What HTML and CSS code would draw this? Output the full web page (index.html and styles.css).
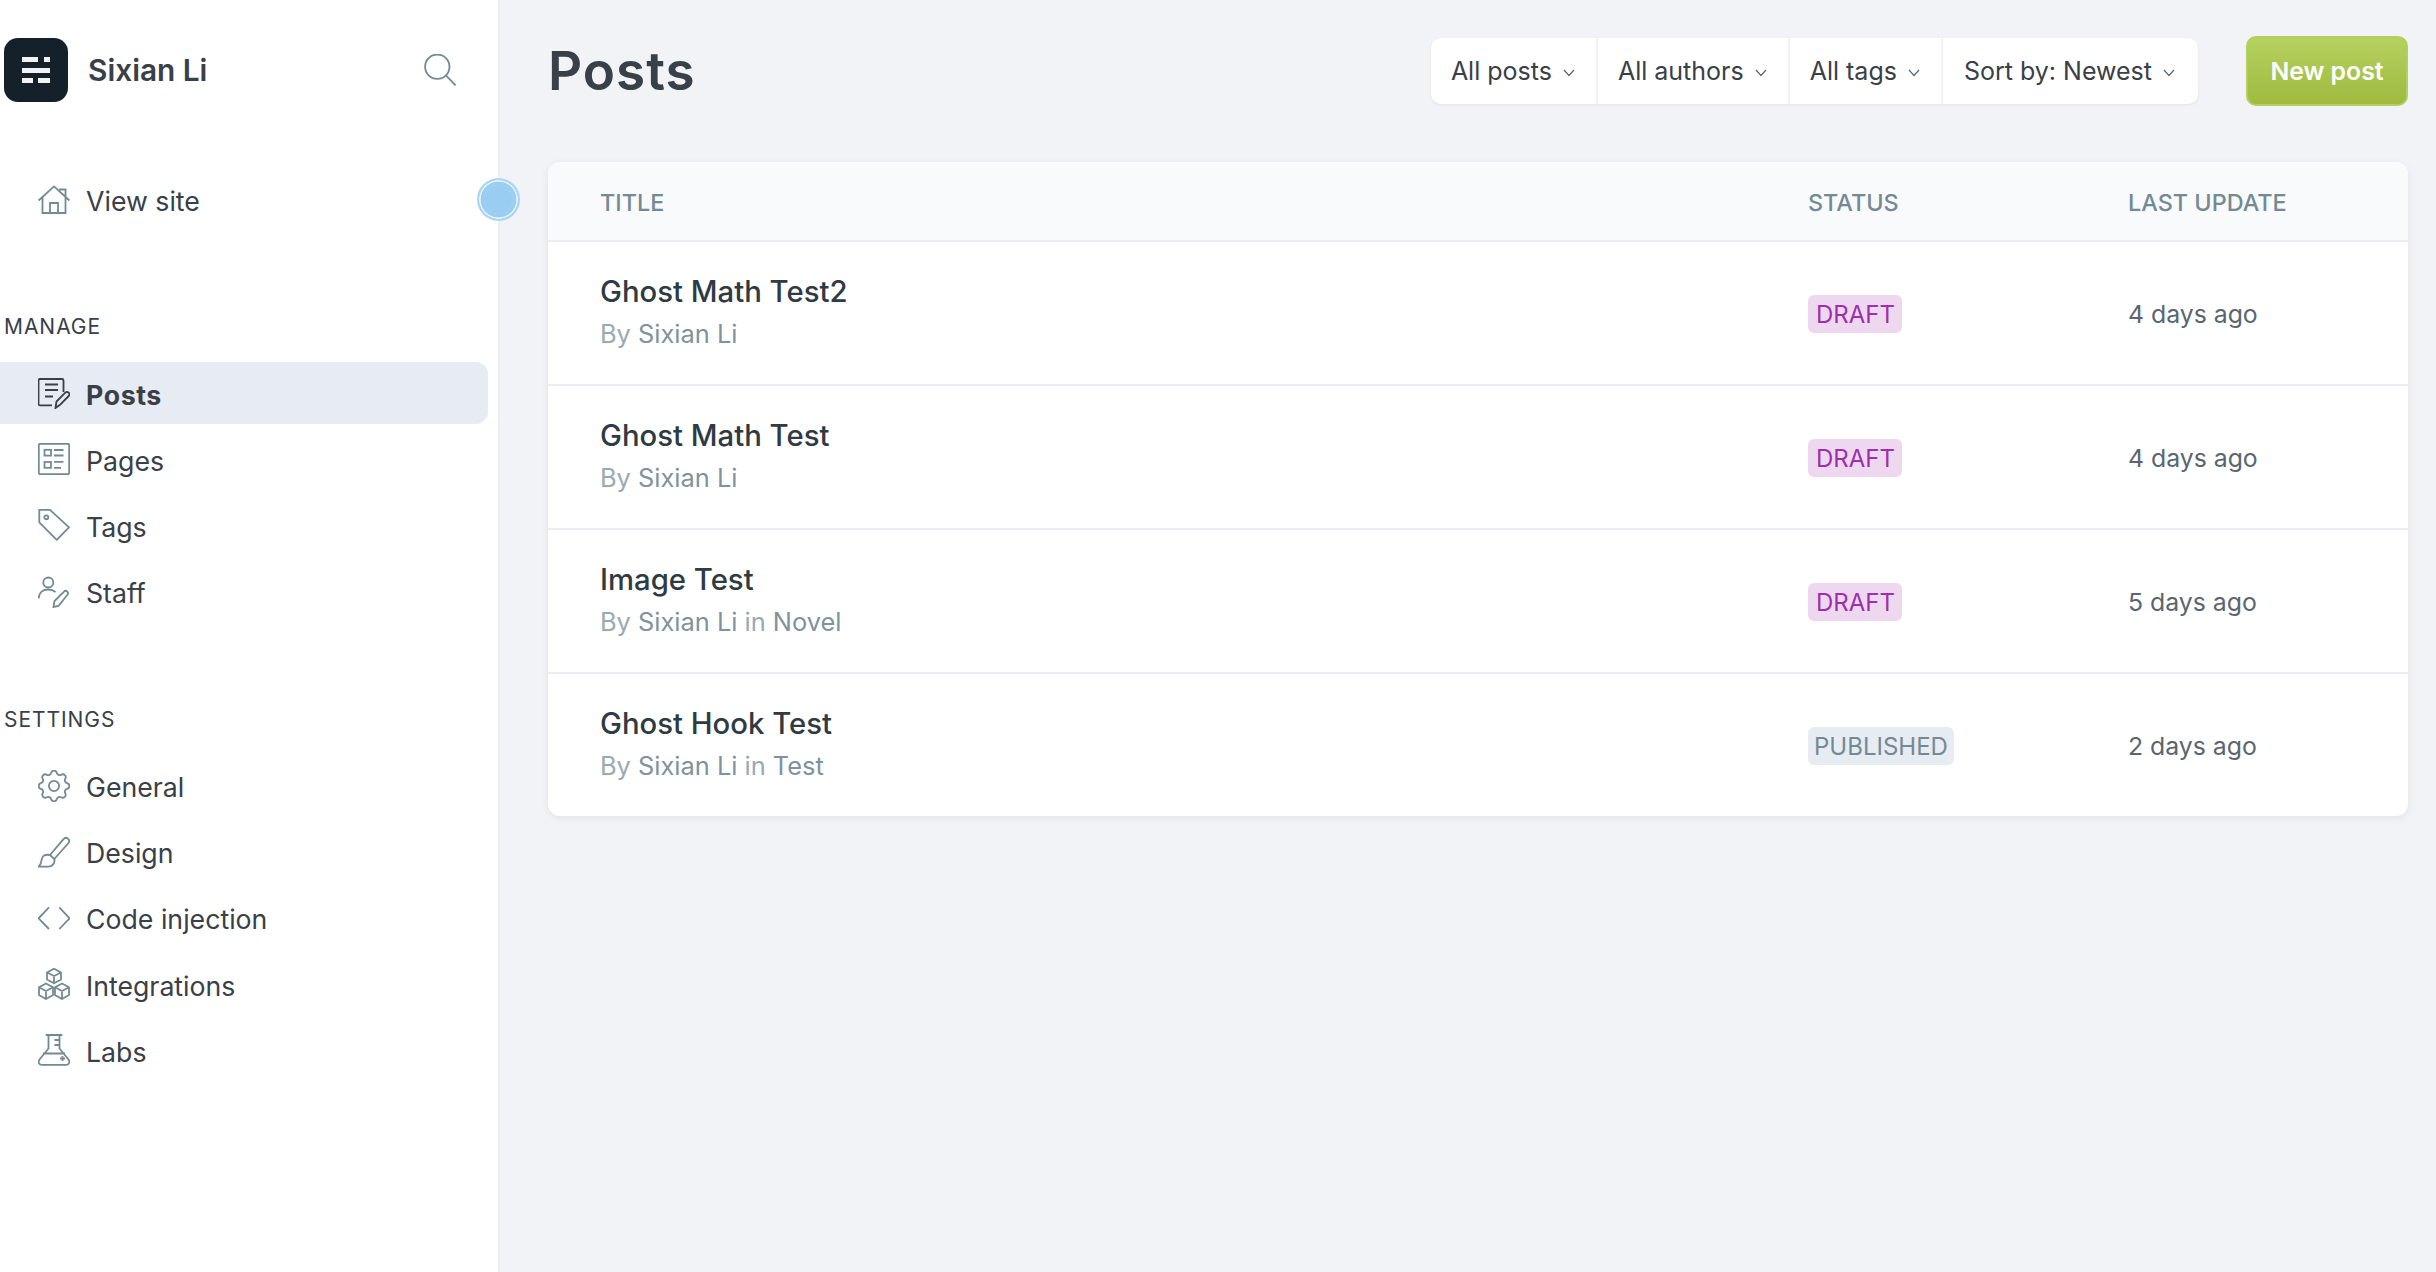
FILE: index.html
```html
<!DOCTYPE html>
<html lang="en">
<head>
    <meta charset="UTF-8">
    <meta name="viewport" content="width=device-width, initial-scale=1.0">
    <title>Posts</title>
    <link rel="stylesheet" href="styles.css">
</head>
<body>
    <div class="app">
        <aside class="sidebar">
            <div class="brand">
                <svg class="logo" viewBox="0 0 64 64">
                    <rect width="64" height="64" rx="14" fill="#15212a"/>
                    <g fill="#f1f3f5">
                        <rect x="18" y="19" width="16" height="5"/>
                        <rect x="40" y="19" width="6" height="5"/>
                        <rect x="18" y="30" width="28" height="5"/>
                        <rect x="18" y="40" width="11" height="5"/>
                        <rect x="34" y="40" width="12" height="5"/>
                    </g>
                </svg>
                <span class="brand-name">Sixian Li</span>
                <svg class="icon search-icon" viewBox="0 0 32 32"><circle cx="13.3" cy="12.7" r="12.2"/><path d="M22.4 21.8l9.2 9.6"/></svg>
            </div>

            <a class="nav-item view-site" href="#">
                <svg class="icon" viewBox="0 0 32 32"><path d="M.6 17.5L16 3.4l15.4 14.1M22 7.500l0-1h5.500v8M4.500 14.500V30h23V14.500M12 30V20h8v10"/></svg>
                View site
            </a>

            <h4 class="nav-label">MANAGE</h4>
            <nav class="nav-group">
                <a class="nav-item active" href="#">
                    <svg class="icon" viewBox="0 0 32 32"><path d="M14 28.300H2a1.500 1.500 0 0 1-1.500-1.500V3.500A1.500 1.500 0 0 1 2 2h22a1.500 1.500 0 0 1 1.500 1.500V15M7 7.500h13M7 13h13M7 19.500h8"/><path d="M17.500 31l1-6.500L27.300 15.700a2.300 2.300 0 0 1 3.400 3.300L22 27.800z"/></svg>
                    Posts
                </a>
                <a class="nav-item" href="#">
                    <svg class="icon" viewBox="0 0 32 32"><rect x=".8" y=".8" width="30.400" height="30.400" rx="1.500"/><rect x="6.500" y="6.800" width="6.500" height="5.800"/><rect x="6.500" y="19" width="6.500" height="5.800"/><path d="M16 7h9.500M16 12.500h9.500M16 18.800h9.500M16 24.800h7"/></svg>
                    Pages
                </a>
                <a class="nav-item" href="#">
                    <svg class="icon" viewBox="0 0 32 32"><path d="M1.300.8H12L31 18.300 18.700 30.800 1.300 13.300z" stroke-linejoin="round"/><circle cx="8.300" cy="8.300" r="2"/></svg>
                    Tags
                </a>
                <a class="nav-item" href="#">
                    <svg class="icon" viewBox="0 0 32 32"><circle cx="10.300" cy="6.500" r="5"/><path d="M.6 22.500C1 16.500 5 13.500 10 13.500c3 0 5.500.8 7.500 2.500"/><path d="M15.500 31l1-6 9.300-9.200a2.300 2.300 0 0 1 3.600 3L20.500 30z"/></svg>
                    Staff
                </a>
            </nav>

            <h4 class="nav-label settings-label">SETTINGS</h4>
            <nav class="nav-group">
                <a class="nav-item" href="#">
                    <svg class="icon" viewBox="2.600 2.600 18.800 18.800"><path class="thin" d="M10.325 4.317c.426-1.756 2.924-1.756 3.350 0a1.724 1.724 0 002.573 1.066c1.543-.94 3.310.826 2.370 2.370a1.724 1.724 0 001.065 2.572c1.756.426 1.756 2.924 0 3.350a1.724 1.724 0 00-1.066 2.573c.94 1.543-.826 3.310-2.370 2.370a1.724 1.724 0 00-2.572 1.065c-.426 1.756-2.924 1.756-3.350 0a1.724 1.724 0 00-2.573-1.066c-1.543.94-3.310-.826-2.370-2.370a1.724 1.724 0 00-1.065-2.572c-1.756-.426-1.756-2.924 0-3.350a1.724 1.724 0 001.066-2.573c-.94-1.543.826-3.310 2.370-2.370.996.608 2.296.07 2.572-1.065z"/><circle class="thin" cx="12" cy="12" r="3"/></svg>
                    General
                </a>
                <a class="nav-item" href="#">
                    <svg class="icon" viewBox="0 0 32 32"><path d="M12 19L25.500 3.200a3 3 0 0 1 5 3.800L16.300 23"/><path d="M12 19c-5-1-8 1-8.300 4.500-.2 3-1 5-3 7.200h9.600c4 0 7-3.500 6-7.700z" stroke-linejoin="round"/></svg>
                    Design
                </a>
                <a class="nav-item" href="#">
                    <svg class="icon" viewBox="0 0 32 32"><path d="M11 5.300L.6 16.300 11 27M21.300 5.300l10.300 11-10.300 10.700"/></svg>
                    Code injection
                </a>
                <a class="nav-item" href="#">
                    <svg class="icon" viewBox="0 0 32 32"><path d="M16 .7l7 3.800v7l-7 3.800-7-3.800v-7zM9 4.500l7 3.600 7-3.600M16 8.100v7.200"/><path d="M8 15.500l7 3.800v7.700l-7 4-7-4v-7.700zM1 19.300l7 3.800 7-3.800M8 23.100V31"/><path d="M24 15.500l7 3.800v7.700l-7 4-7-4v-7.700zM17 19.300l7 3.800 7-3.800M24 23.100V31"/></svg>
                    Integrations
                </a>
                <a class="nav-item" href="#">
                    <svg class="icon" viewBox="0 0 32 32"><path d="M7.700 1h16.600M10.500 1v13.500L1.500 25.500c-1.800 2.500-.5 5.300 2.500 5.300h24c3 0 4.300-2.800 2.500-5.300l-9-11V1M21.500 6h-5M21.500 11h-5M5 19.500h22"/><path d="M22 24.500h5M24.500 22v5M8 27.500h.1M12.500 23.500h.1"/></svg>
                    Labs
                </a>
            </nav>
        </aside>

        <main class="content">
            <header class="page-header">
                <h1>Posts</h1>
                <div class="filters">
                    <button class="filter">All posts <svg class="caret" viewBox="0 0 12 8"><path d="M1 1l5 5.500L11 1"/></svg></button>
                    <button class="filter">All authors <svg class="caret" viewBox="0 0 12 8"><path d="M1 1l5 5.500L11 1"/></svg></button>
                    <button class="filter">All tags <svg class="caret" viewBox="0 0 12 8"><path d="M1 1l5 5.500L11 1"/></svg></button>
                    <button class="filter">Sort by: Newest <svg class="caret" viewBox="0 0 12 8"><path d="M1 1l5 5.500L11 1"/></svg></button>
                </div>
                <button class="new-post">New post</button>
            </header>

            <table class="posts">
                <thead>
                    <tr>
                        <th class="col-title">TITLE</th>
                        <th class="col-status">STATUS</th>
                        <th class="col-date">LAST UPDATE</th>
                    </tr>
                </thead>
                <tbody>
                    <tr>
                        <td>
                            <h3>Ghost Math Test2</h3>
                            <p class="meta">By <span>Sixian Li</span></p>
                        </td>
                        <td class="status"><span class="badge draft">DRAFT</span></td>
                        <td class="date">4 days ago</td>
                    </tr>
                    <tr>
                        <td>
                            <h3>Ghost Math Test</h3>
                            <p class="meta">By <span>Sixian Li</span></p>
                        </td>
                        <td class="status"><span class="badge draft">DRAFT</span></td>
                        <td class="date">4 days ago</td>
                    </tr>
                    <tr>
                        <td>
                            <h3>Image Test</h3>
                            <p class="meta">By <span>Sixian Li</span> in <span>Novel</span></p>
                        </td>
                        <td class="status"><span class="badge draft">DRAFT</span></td>
                        <td class="date">5 days ago</td>
                    </tr>
                    <tr>
                        <td>
                            <h3>Ghost Hook Test</h3>
                            <p class="meta">By <span>Sixian Li</span> in <span>Test</span></p>
                        </td>
                        <td class="status"><span class="badge published">PUBLISHED</span></td>
                        <td class="date">2 days ago</td>
                    </tr>
                </tbody>
            </table>
        </main>
    </div>
    <div class="pointer"></div>
</body>
</html>
```
FILE: styles.css
```css
* {
    margin: 0;
    padding: 0;
    box-sizing: border-box;
}

body, html {
    height: 100%;
    font-family: Inter, "Noto Sans", sans-serif;
    color: #394047;
    background: #f1f3f7;
}

.app {
    display: flex;
    height: 100%;
}

/* sidebar */
.sidebar {
    width: 500px;
    flex-shrink: 0;
    padding: 38px 10px 0 0;
    background: #fff;
    border-right: 2px solid #eceef4;
}

.brand {
    display: flex;
    align-items: center;
    height: 64px;
    padding-left: 4px;
    margin-bottom: 66px;
}

.logo {
    width: 64px;
    height: 64px;
}

.brand-name {
    margin-left: 20px;
    font-size: 29.8px;
    font-weight: 600;
    flex-grow: 1;
}

.icon {
    width: 32px;
    height: 32px;
    flex-shrink: 0;
    fill: none;
    stroke: #738a94;
    stroke-width: 1.8;
}

.icon .thin {
    stroke-width: 1.05;
}

.search-icon {
    margin-right: 32px;
}

.nav-item {
    display: flex;
    align-items: center;
    gap: 16px;
    height: 62px;
    padding: 3px 0 0 38px;
    font-size: 26.7px;
    color: #394047;
    text-decoration: none;
    border-radius: 0 12px 12px 0;
}

.nav-item .icon {
    margin-bottom: 3px;
}

.nav-item.active {
    background: #e7ebf3;
    font-weight: 700;
    letter-spacing: 0.6px;
}

.nav-item.active .icon {
    stroke: #394047;
}

.nav-group {
    display: flex;
    flex-direction: column;
    gap: 4.2px;
}

.nav-label {
    margin: 85px 0 23px 4px;
    font-size: 21px;
    line-height: 24px;
    font-weight: 400;
    letter-spacing: 0.95px;
}

/* main area */
.content {
    flex-grow: 1;
    padding: 36px 28px 0 48px;
}

.page-header {
    display: flex;
    align-items: center;
    height: 70px;
    margin-bottom: 56px;
}

h1 {
    flex-grow: 1;
    font-size: 53px;
    font-weight: 600;
    letter-spacing: 1px;
}

.filters {
    display: flex;
    height: 66px;
    margin-right: 48px;
    background: #fff;
    border-radius: 10px;
    box-shadow: 0 1px 3px rgba(0, 0, 0, 0.07);
}

.filter {
    display: flex;
    align-items: center;
    gap: 11px;
    padding: 0 21px 0 20px;
    font-family: inherit;
    font-size: 25px;
    color: #394047;
    background: none;
    border: none;
    border-left: 2px solid #f1f3f7;
}

.filter:first-child {
    border-left: none;
}

.filter:last-child {
    padding: 0 23px 0 21px;
}

.caret {
    width: 12px;
    height: 8px;
    margin-top: 4px;
    fill: none;
    stroke: #5b6872;
    stroke-width: 1.2;
}

.new-post {
    width: 162px;
    height: 70px;
    font-family: inherit;
    font-size: 24.8px;
    font-weight: 600;
    color: #fff;
    background: linear-gradient(#b5d15f, #9fba3f);
    border: 2px solid #b3d05e;
    border-radius: 10px;
}

/* posts table */
.posts {
    width: 100%;
    border-collapse: separate;
    border-spacing: 0;
    background: #fff;
    border-radius: 12px;
    box-shadow: 0 2px 8px rgba(0, 0, 0, 0.07);
}

.posts th {
    height: 80px;
    padding-top: 2px;
    font-size: 23.4px;
    font-weight: 500;
    text-align: left;
    color: #738a94;
    background: #f9fafc;
    border-bottom: 2px solid #e9eef3;
}

.posts .col-title {
    padding-left: 52px;
    border-top-left-radius: 12px;
}

.posts .col-status {
    width: 320px;
}

.posts .col-date {
    width: 280px;
    border-top-right-radius: 12px;
}

.posts td {
    height: 144px;
    border-bottom: 2px solid #e9eef3;
}

.posts tr:last-child td {
    height: 142px;
    border-bottom: none;
}

.posts td:first-child {
    padding: 0 0 1px 52px;
}

.posts .status,
.posts .date {
    padding-top: 1px;
}

.posts h3 {
    font-size: 29.3px;
    line-height: 36px;
    font-weight: 550;
    color: #2f3a42;
}

.meta {
    margin-top: 6px;
    font-size: 25.4px;
    line-height: 36px;
    color: #9aa9b3;
}

.meta span {
    color: #7f929e;
}

.badge {
    display: inline-block;
    height: 38px;
    padding: 0 6px;
    font-size: 24px;
    line-height: 40px;
    border-radius: 6px;
}

.draft {
    padding: 0 7px 0 8px;
    color: #a02cb0;
    background: #eed8ef;
}

.published {
    color: #738a94;
    background: #e7ecf3;
}

.date {
    font-size: 24.8px;
    color: #586670;
}

/* cursor marker from the recording */
.pointer {
    position: absolute;
    left: 477px;
    top: 178px;
    width: 43px;
    height: 43px;
    border-radius: 50%;
    background: radial-gradient(circle, #99cdf2 0 14px, #a8d4f4 14.5px, #99cdf2 15px, #99cdf2 17.5px, #e6f3fc 18.2px, #e6f3fc 19px, #a9d6f5 19.5px);
}
```
